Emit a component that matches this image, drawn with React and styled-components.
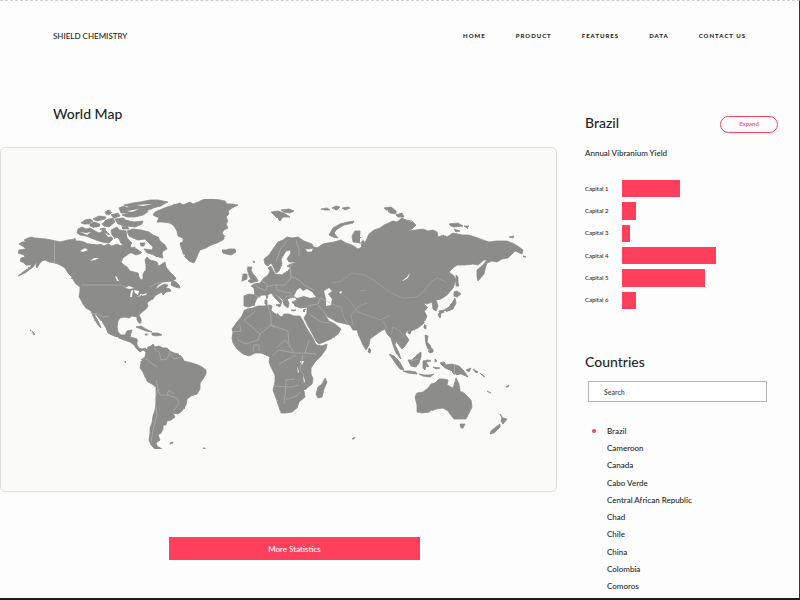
import React, { useState } from "react";
import styled, { createGlobalStyle } from "styled-components";

const red = "#ff3f5c";
const ink = "#262626";
const land = "#8c8c8b";
const sea = "#fafaf9";

const GlobalStyle = createGlobalStyle`
  *, *::before, *::after { box-sizing: border-box; }
  body {
    margin: 0;
    background: #fdfdfd;
    color: ${ink};
    font-family: Lato, "Liberation Sans", sans-serif;
    font-size: 8px;
    font-weight: 500;
  }
  button, input { font: inherit; color: inherit; }
`;

const Page = styled.div`
  min-height: 100vh;
  border-top: 1px dashed #cfcfcf;
  border-right: 1px solid #333333;
  border-bottom: 2px solid #1c1c1c;
`;

const Header = styled.header`
  display: flex;
  align-items: center;
  justify-content: space-between;
  height: 69px;
  padding: 0 53px;
`;

const Brand = styled.a`
  color: inherit;
  text-decoration: none;
  font-size: 8px;
  line-height: 12px;
`;

const Nav = styled.nav`
  display: flex;
  gap: 30px;
`;

const NavLink = styled.a`
  color: inherit;
  text-decoration: none;
  font-size: 6px;
  line-height: 12px;
  font-weight: 900;
  letter-spacing: 1px;
`;

const Columns = styled.div`
  display: grid;
  grid-template-columns: minmax(0, 1fr) 242px;
`;

const Main = styled.main`
  display: flex;
  flex-direction: column;
  padding-top: 33px;
`;

const Heading = styled.h2`
  margin: 0;
  font-size: 14px;
  line-height: 22px;
  font-weight: 500;
`;

const MapTitle = styled(Heading)`
  padding-left: 53px;
`;

const MapPanel = styled.section`
  margin-top: 22px;
  border: 1px solid #dededc;
  border-radius: 5px;
  background: ${sea};
`;

const MapDrawing = styled.svg`
  display: block;
  width: 100%;
  height: auto;
`;

const StatisticsButton = styled.button`
  align-self: center;
  width: 45%;
  height: 23px;
  margin: 45px 0 38px 32px;
  padding: 0;
  border: 0;
  background: ${red};
  color: #ffffff;
  font-size: 8px;
  cursor: pointer;
`;

const Sidebar = styled.aside`
  padding: 41px 21px 0 28px;
`;

const SidebarTop = styled.div`
  display: flex;
  align-items: center;
  justify-content: space-between;
  height: 24px;
`;

const ExpandButton = styled.button`
  width: 58px;
  height: 17px;
  margin-top: 2px;
  padding: 0;
  border: 1px solid ${red};
  border-radius: 9px;
  background: transparent;
  color: ${red};
  font-size: 6px;
  line-height: 12px;
  cursor: pointer;
`;

const ChartTitle = styled.h3`
  margin: 12px 0 0;
  font-size: 8px;
  line-height: 12px;
  font-weight: 500;
`;

const Chart = styled.ul`
  display: grid;
  grid-auto-rows: 1fr;
  gap: 5px;
  height: 129px;
  margin: 21px 0 0;
  padding: 0;
  list-style: none;
`;

const ChartRow = styled.li`
  display: grid;
  grid-template-columns: 37px 1fr;
  align-items: stretch;
`;

const ChartLabel = styled.span`
  align-self: center;
  font-size: 6px;
  line-height: 12px;
`;

const Bar = styled.div`
  background: ${red};
`;

const CountriesTitle = styled(Heading)`
  margin-top: 42px;
`;

const SearchInput = styled.input`
  display: block;
  width: 179px;
  height: 21px;
  margin: 8px 0 0 3px;
  padding: 0 15px;
  border: 1px solid #b4b4b4;
  border-radius: 0;
  background: #fefefe;
  font-size: 7px;
  &::placeholder { color: #444444; opacity: 1; }
`;

const CountryList = styled.ul`
  display: grid;
  grid-auto-rows: 1fr;
  height: 173px;
  margin: 20px 0 0;
  padding: 0;
  list-style: none;
`;

const CountryItem = styled.li`
  display: flex;
`;

const CountryButton = styled.button`
  display: grid;
  grid-template-columns: 15px auto;
  align-items: center;
  margin: 0 0 0 7px;
  padding: 0;
  border: 0;
  background: transparent;
  font-size: 8px;
  text-align: left;
  cursor: pointer;
`;

const Dot = styled.span`
  width: 4px;
  height: 4px;
  border-radius: 50%;
  background: ${(p) => (p.$on ? red : "transparent")};
`;

const NORTH_AMERICA = `M32 237L34 238 40 238.500 46 239 54 240.500 60 242 64 241 68 240 73 239.500 75 238.500 76 241 80 241 84 242 88 244 92 243 97 245 100 244 104 246 108 244 112 246 117 244 121 246 124 242 127 246 130 243 131 248 135 247 134 252 130 253 127 255 123 258 121 262 124 265 127 267 130 271 134 272 138 273 139 277 141 280 143 279 143 274 146 270 146 265 145 260 147 257 150 260 154 261 157 262 159 266 162 264 165 262 166 267 169 271 172 274 175 277 176 279 171 281 163 282 158 285 155 290 159 287 164 284 168 285 166 288 170 289 171 291 166 292 163 295 162 292 158 294 155 296 153 299 149 301 147 303 148 306 146 309 141 313 139 315 141 319 141 323 139 323 137 320 137 317 132 316 129 318 124 317 120 318 118 321 117 327 118 332 121 335 125 335 127 331 132 330 130 337 134 338 137 339 137 345 139 348 142 349 145 348 147 350 146 352 143 350 140 352 136 348 134 345 130 342 124 340 119 338 112 335 108 333 106 328 103 323 98 317 95 313 95 316 98 321 100 325 101 328 98 325 95 320 93 316 91 311 86 308 83 304 81 300 79 297 80 291 80 287 76 284 74 281 71 276 68 273 65 268 62 266 58 264 55 263 49 262 45 260 42 261 40 263 37 268 36 266 37 262 33 267 29 270 25 273 18 276 23 272 29 268 32 265 26 265 24 263 20 261 21 258 25 257 24 255 18 253 19 250 26 249 24 247 19 244 22 242 26 242 24 240 28 238Z`;

const COASTS = [
  NORTH_AMERICA,
  // Arctic islands
  "M78 229L82 227 86 229 90 228 95 231 99 233 105 230 109 234 113 239 109 243 102 242 96 240 91 238 86 236 80 235 77 233Z",
  "M81 223L85 220 90 219 93 221 89 224 84 224Z",
  "M90 224L94 222 100 224 99 227 93 227 90 226Z",
  "M93 219L99 216 106 217 105 219 97 221Z",
  "M105 212L109 210 112 212 109 215 106 214Z",
  "M102 224L106 220 113 218 115 222 109 227 104 226Z",
  "M111 230L117 227 121 232 119 237 115 238 112 235Z",
  "M115 219L123 218 129 221 126 226 118 224Z",
  "M119 208L124 206 129 209 127 213 121 213Z",
  "M111 215L118 213 120 216 114 218Z M100 229L104 228 106 229 103 231Z M121 227L127 226 129 229 123 229Z",
  "M124 205L133 203 140 202 150 200 158 200 168 202 164 204 161 206 153 208 149 211 143 215 135 217 127 217 122 215 128 213 124 209 130 207Z",
  "M121 221L129 221 134 222 143 221 142 224 135 227 127 226 121 225Z",
  "M120 230L126 231 127 238 132 243 128 248 121 243 118 237Z",
  "M127 231L133 229 141 230 149 232 153 235 158 237 160 241 165 245 167 249 163 251 162 254 163 258 157 257 152 254 147 253 144 249 152 250 153 247 149 243 145 239 138 240 133 238 129 236Z",
  "M131 248L137 249 142 253 136 255 130 252Z M140 243L145 243 144 246 141 246Z",
  // Greenland and Iceland
  "M153 215L155 212 162 209 167 207 174 205 180 203 183 205 190 202 193 204 200 201 205 199 214 199 220 200 225 201 227 204 232 204 238 205 232 208 228 211 229 214 226 217 228 221 226 224 228 228 224 230 222 233 225 237 223 240 217 243 211 245 206 248 200 250 198 254 196 259 194 263 189 261 185 257 183 253 181 247 180 243 183 242 183 238 178 236 177 231 174 226 170 223 162 222 157 222 159 218Z",
  "M222 250L226 250 229 249 235 249 236 252 231 255 226 254 223 253Z",
  // Nova Scotia, Newfoundland and the Caribbean
  "M172 280L176 282 179 285 180 288 175 287 171 285Z",
  "M136 327L141 326 146 329 150 331 152 332 146 331 141 329Z",
  "M152 333L158 333 162 335 156 336 152 335Z",
  "M145 334L148 334 148 335 145 335Z",
  // South America
  "M146 352L148 347 151 346 153 344 155 347 159 346 163 348 167 348 170 351 174 353 179 354 182 357 184 361 188 362 192 363 198 365 202 367 206 370 206 374 203 379 200 383 200 389 197 394 191 396 187 399 186 405 182 411 178 414 173 413 175 417 171 420 167 421 166 425 163 425 163 429 161 433 158 435 160 440 156 443 157 446 162 449 155 449 151 445 149 440 150 433 150 428 152 423 153 416 155 410 156 401 156 387 152 384 148 382 145 377 143 372 140 368 141 363 141 360 145 357Z",
  "M170 443L173 442 173 443 170 444Z M203 448L205 448 205 449Z M33 332L35 334 34 335 32 331Z M30 330L31 330 31 331Z M125 361L126 362 125 363Z M353 438L355 437 354 439 352 439Z",
  // Africa
  "M247 309L253 308 258 306 264 306 270 305 272 306 271 310 274 313 278 315 282 317 284 314 289 314 294 316 300 316 303 321 306 327 309 332 313 338 315 343 317 345 322 346 327 344 326 349 321 356 315 362 311 368 311 374 313 379 312 384 307 388 304 391 305 397 299 402 297 408 292 412 286 413 281 413 279 407 276 398 273 390 275 382 275 375 271 367 269 362 270 357 266 355 261 353 255 353 249 356 243 354 237 349 233 343 232 338 233 332 232 329 237 322 242 316 244 311Z",
  "M325 378L327 382 324 389 322 397 318 398 316 394 318 387 322 384Z",
  // Eurasia
  "M244 296L249 294 255 295 254 288 251 286 254 284 260 283 264 278 268 275 270 271 268 268 271 266 273 270 275 274 282 275 287 271 291 268 287 266 291 264 297 262 289 262 287 259 291 253 290 250 286 251 283 256 281 259 282 264 279 271 276 273 273 266 271 263 268 266 265 264 264 259 269 255 273 249 278 242 283 240 287 237 292 238 298 237 304 241 312 244 314 248 308 249 305 248 307 252 312 252 314 247 317 248 323 244 328 243 334 242 341 240 346 243 352 245 358 249 362 247 360 243 353 242 352 236 355 231 360 231 361 237 365 243 369 234 374 230 380 228 384 225 393 221 397 222 402 218 406 220 412 221 416 225 412 229 407 231 416 230 423 229 428 231 433 230 437 232 438 237 444 235 447 237 453 233 462 235 468 235 475 237 483 240 489 242 497 241 507 241 514 244 519 247 523 250 522 254 515 251 508 258 502 259 497 262 492 261 487 263 485 269 484 274 478 281 477 276 477 270 482 266 487 260 484 260 478 265 473 264 465 265 457 265 453 268 449 272 454 276 456 280 453 288 447 295 441 299 436 300 438 306 436 311 433 309 432 302 427 304 423 303 428 308 424 311 427 316 424 323 418 328 411 331 408 330 405 334 409 340 405 346 402 349 398 344 396 341 395 345 399 353 401 359 396 353 393 345 391 338 387 334 385 329 381 331 374 336 370 339 369 345 366 350 363 345 359 336 357 330 353 330 350 325 342 323 337 322 332 319 328 317 325 315 329 321 335 324 341 329 338 334 331 339 319 344 316 341 313 335 308 326 304 318 307 313 307 307 301 308 295 306 292 302 297 300 295 297 290 298 287 299 289 303 288 308 284 305 283 300 277 295 274 292 278 297 282 301 281 304 276 299 271 293 268 295 262 295 257 298 254 305 249 307 244 306Z",
  // British Isles
  "M247 267L252 267 251 270 253 274 256 277 258 281 251 283 248 281 251 279 249 276 248 272Z",
  "M243 274L247 274 247 279 242 281Z M253 261L255 262 254 263Z",
  // Svalbard, Franz Josef Land, Novaya Zemlya, Siberian islands
  "M271 212L278 211 284 213 290 217 283 217 280 221 276 217Z M281 210L289 209 294 211 290 213 284 212Z",
  "M321 209L327 208 330 210 325 210Z M332 208L336 206 340 207 337 210Z M342 208L348 207 350 208 345 210Z",
  "M329 235L333 228 340 224 348 222 354 221 353 223 344 225 337 229 334 233 338 238 333 237Z",
  "M384 208L391 207 396 211 396 214 390 213Z M396 215L402 213 404 217 398 217Z M449 224L458 223 463 226 454 227 451 226Z M464 226L469 226 467 228Z M454 229L460 231 456 232Z M509 237L514 236 513 238Z M523 256L526 257 524 257Z",
  // Italian and Greek islands
  "M276 305L281 304 280 307Z M265 300L267 300 267 305 265 304Z M266 295L268 296 267 299Z M291 310L296 310 293 311Z M303 310L306 309 304 311Z",
  // Sakhalin, Japan, Taiwan, Hainan
  "M456 275L458 277 458 283 459 286 456 286Z M454 292L457 291 461 294 457 297 454 296Z M455 298L456 303 453 309 448 311 444 312 440 314 439 311 444 310 449 307 452 303Z M439 313L441 315 440 318 438 315Z",
  "M424 326L426 325 426 329 424 328Z M408 331L411 331 410 334 408 333Z",
  // Philippines
  "M425 335L428 336 427 342 430 345 432 350 428 349 426 344Z M428 351L433 349 433 352 430 353Z",
  // Sri Lanka and Indonesia
  "M369 348L371 350 370 353 368 352Z",
  "M389 354L394 356 399 361 402 366 404 370 400 369 396 364 392 358Z",
  "M403 371L410 371 416 372 417 374 408 373Z M419 374L424 375 430 375 434 374 430 377 423 376Z",
  "M408 360L412 360 418 354 421 352 421 357 419 363 416 367 411 366Z",
  "M423 361L428 360 431 361 426 362 429 367 426 366 425 370 423 368Z",
  "M435 359L437 361 435 362Z M433 367L440 368 436 369Z",
  "M440 363L444 362 446 365 452 364 459 366 464 371 468 377 461 374 454 374 450 370 445 368Z",
  "M466 370L471 368 469 372Z M473 369L478 372 476 373Z M480 373L485 377 483 376Z M487 391L491 393 489 392Z M506 387L509 385 508 387Z",
  // Australia, Tasmania, New Zealand
  "M415 397L417 393 423 392 428 388 431 384 435 383 439 379 443 379 448 380 447 385 453 388 455 382 456 378 459 384 460 390 465 394 471 400 472 407 469 413 466 419 460 419 454 419 450 414 448 411 443 408 436 409 429 412 422 413 417 412 417 405Z",
  "M460 424L465 424 463 428 461 428Z",
  "M500 414L503 418 507 419 503 424 501 421 502 418Z M500 424L500 427 494 433 490 434 491 431 496 427Z",
];

// Bays, seas and lakes cut out of the land
const WATERS = [
  "M297 290L300 288 303 291 307 289 312 292 316 297 310 298 304 296 297 298 294 296Z",
  "M324 291L329 288 332 291 328 294 332 299 331 305 326 306 326 299Z",
  "M339 292L342 291 341 294Z M402 281L407 277 410 273 408 278 403 281Z",
  "M360 243L364 239 366 235 362 236 361 230 360 236Z M360 247L362 242 357 248Z",
  "M80 251L85 248 88 250 83 252Z M90 261L94 258 99 258 95 260Z M115 276L117 277 119 281 117 281Z",
  "M125 288L129 286 134 288 130 289Z M131 291L133 290 132 297 130 297Z M134 290L139 291 138 295 135 293Z M136 297L141 295 147 293 146 295Z",
  "M300 361L304 361 302 365Z M297 366L299 372 298 373Z M303 375L305 381 304 383Z",
  "M89 244L93 242 98 244 92 244Z M105 233L112 236 108 237Z M127 211L139 209 132 212Z M124 219L137 218 138 220 127 220Z",
  "M80 232L86 233 91 232 87 235Z M136 205L153 204 143 206Z M147 211L152 209 149 212Z",
];

const BORDERS = [
  "M54.500 240L54.500 263",
  "M81 285L121 285 125 287",
  "M90 313L98 314 103 317 109 316",
  "M150 287L155 284 163 282",
  // South America
  "M154 348L159 352 161 360 167 359 170 351 M170 354L174 359 182 357 M145 358L151 363 157 367 M156 380L158 389 160 395 167 395 169 390 174 394 M167 395L177 398 179 404 173 411 M158 389L155 400 157 415 153 430 151 442",
  // Africa
  "M244 320L260 334 271 325 271 316 268 306 M244 320L251 315 255 311 M260 334L258 340 246 344 238 340 M271 325L288 331 289 345 294 353 305 353 309 340 M271 325L275 328 M276 348L285 340 288 344 M272 356L279 350 294 353 M305 353L316 354 M303 355L300 370 304 375 M279 364L296 355 M273 386L291 387 299 385 M286 387L284 404 M286 387L286 380 295 379 M286 399L295 397 300 392 M253 352L254 345 259 345 259 351 M233 332L241 331 240 325",
  // Europe and western Asia
  "M287 241L280 250 276 262 M296 240L299 250 299 256 M266 287L274 285 285 285 291 278 290 267 294 262 M291 276L299 280 304 285 314 290 M256 286L265 291 268 285 262 281 M255 295L261 298 M276 284L277 290 284 292 292 293 M283 300L287 296 294 296 M307 306L318 304 320 298 330 303 M309 314L321 322 330 323 M318 305L327 316",
  "M454.500 365L454.500 375 M411 361L418 359",
];

const FAINT_BORDERS = [
  "M332 283L342 281 351 273 365 275 375 281 383 287 391 293 403 298 417 297 425 290 431 282 437 278 446 282",
  "M330 304L341 307 344 318 348 324 M341 293L351 302 358 312 369 316 381 320 390 315 M353 325L351 315 359 306 367 303 M360 291L367 290 M391 335L393 327 400 331 404 337 M383 321L387 329",
];

const capitals = [
  { name: "Capital 1", value: 37 },
  { name: "Capital 2", value: 9 },
  { name: "Capital 3", value: 5 },
  { name: "Capital 4", value: 60 },
  { name: "Capital 5", value: 53 },
  { name: "Capital 6", value: 9 },
];

const countries = [
  "Brazil",
  "Cameroon",
  "Canada",
  "Cabo Verde",
  "Central African Republic",
  "Chad",
  "Chile",
  "China",
  "Colombia",
  "Comoros",
];

const links = ["HOME", "PRODUCT", "FEATURES", "DATA", "CONTACT US"];

function WorldMap() {
  return (
    <MapDrawing viewBox="1 148 555 343" role="img" aria-label="World map">
      <defs>
        <filter id="coastline" x="0" y="0" width="100%" height="100%" colorInterpolationFilters="sRGB">
          <feTurbulence type="fractalNoise" baseFrequency="0.3" numOctaves="1" seed="4" result="noise" />
          <feDisplacementMap in="SourceGraphic" in2="noise" scale="2" xChannelSelector="R" yChannelSelector="G" />
        </filter>
      </defs>
      <g filter="url(#coastline)">
        <path d={COASTS.join(" ")} fill={land} stroke={land} strokeWidth="0.8" />
        <path d={WATERS.join(" ")} fill={sea} />
      </g>
      <g fill="none" stroke="#b9b9b6" strokeLinejoin="round">
        <path d={BORDERS.join(" ")} strokeWidth="0.6" />
        <path d={FAINT_BORDERS.join(" ")} strokeWidth="0.4" />
      </g>
    </MapDrawing>
  );
}

export default function App() {
  const [selected, setSelected] = useState("Brazil");
  const [query, setQuery] = useState("");
  const shown = countries.filter((c) =>
    c.toLowerCase().includes(query.toLowerCase())
  );

  return (
    <>
      <GlobalStyle />
      <Page>
        <Header>
          <Brand href="#">SHIELD CHEMISTRY</Brand>
          <Nav>
            {links.map((label) => (
              <NavLink key={label} href="#">{label}</NavLink>
            ))}
          </Nav>
        </Header>
        <Columns>
          <Main>
            <MapTitle>World Map</MapTitle>
            <MapPanel>
              <WorldMap />
            </MapPanel>
            <StatisticsButton type="button">More Statistics</StatisticsButton>
          </Main>
          <Sidebar>
            <SidebarTop>
              <Heading>{selected}</Heading>
              <ExpandButton type="button">Expand</ExpandButton>
            </SidebarTop>
            <ChartTitle>Annual Vibranium Yield</ChartTitle>
            <Chart>
              {capitals.map((c) => (
                <ChartRow key={c.name}>
                  <ChartLabel>{c.name}</ChartLabel>
                  <Bar style={{ width: `${c.value}%` }} />
                </ChartRow>
              ))}
            </Chart>
            <CountriesTitle>Countries</CountriesTitle>
            <SearchInput
              type="text"
              aria-label="Search"
              placeholder="Search"
              value={query}
              onChange={(e) => setQuery(e.target.value)}
            />
            <CountryList>
              {shown.map((c) => (
                <CountryItem key={c}>
                  <CountryButton type="button" onClick={() => setSelected(c)}>
                    <Dot $on={c === selected} />
                    {c}
                  </CountryButton>
                </CountryItem>
              ))}
            </CountryList>
          </Sidebar>
        </Columns>
      </Page>
    </>
  );
}
